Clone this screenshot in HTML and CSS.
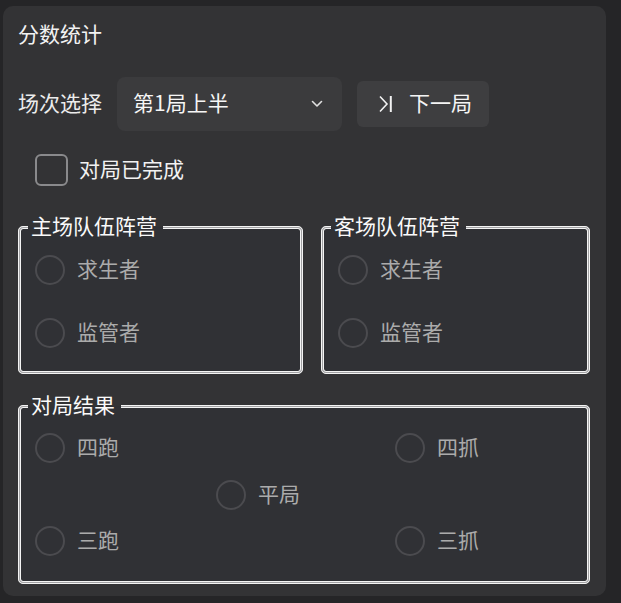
FILE: index.html
```html
<!DOCTYPE html>
<html lang="zh-CN">
<head>
<meta charset="utf-8">
<title>分数统计</title>
<link rel="stylesheet" href="styles.css">
</head>
<body>
<div class="panel">
  <h2 class="title">分数统计</h2>
  <div class="round-row">
    <span class="field-label">场次选择</span>
    <div class="select">
      <span class="select-value">第1局上半</span>
      <svg class="chevron" width="12" height="8" viewBox="0 0 12 8"><polyline points="1.5,1.5 6,6 10.5,1.5" fill="none" stroke="#e0e0e0" stroke-width="1.6" stroke-linecap="round" stroke-linejoin="round"/></svg>
    </div>
    <button class="next-btn" type="button">
      <svg class="next-icon" width="16" height="18" viewBox="0 0 16 18"><polyline points="2,1.5 9,9 2,16.5" fill="none" stroke="#f2f2f2" stroke-width="1.6"/><line x1="12.8" y1="1" x2="12.8" y2="17" stroke="#f2f2f2" stroke-width="2"/></svg>
      <span class="btn-text">下一局</span>
    </button>
  </div>
  <label class="check-row">
    <span class="checkbox"></span>
    <span class="check-text">对局已完成</span>
  </label>
  <div class="camps">
    <fieldset class="group">
      <legend>主场队伍阵营</legend>
      <div class="radio-list">
        <label class="radio"><span class="dot"></span><span class="radio-text">求生者</span></label>
        <label class="radio"><span class="dot"></span><span class="radio-text">监管者</span></label>
      </div>
    </fieldset>
    <fieldset class="group">
      <legend>客场队伍阵营</legend>
      <div class="radio-list">
        <label class="radio"><span class="dot"></span><span class="radio-text">求生者</span></label>
        <label class="radio"><span class="dot"></span><span class="radio-text">监管者</span></label>
      </div>
    </fieldset>
  </div>
  <fieldset class="group result">
    <legend>对局结果</legend>
    <div class="result-grid">
      <label class="radio r-4run"><span class="dot"></span><span class="radio-text">四跑</span></label>
      <label class="radio r-4catch"><span class="dot"></span><span class="radio-text">四抓</span></label>
      <label class="radio r-draw"><span class="dot"></span><span class="radio-text">平局</span></label>
      <label class="radio r-3run"><span class="dot"></span><span class="radio-text">三跑</span></label>
      <label class="radio r-3catch"><span class="dot"></span><span class="radio-text">三抓</span></label>
    </div>
  </fieldset>
</div>
</body>
</html>
```
FILE: styles.css
```css
* { box-sizing: border-box; }
html, body { margin: 0; padding: 0; }
body {
  background: #252527;
  font-family: "Noto Sans CJK SC", "Noto Sans", sans-serif;
  font-size: 21px;
  color: #f0f0f0;
  width: 621px;
  height: 603px;
  overflow: hidden;
}
.panel {
  margin: 6px 0 0 3px;
  width: 603px;
  height: 590px;
  background: #333335;
  border-radius: 10px;
  padding: 15px 16px 14px 15px;
  display: flex;
  flex-direction: column;
}
.title {
  margin: 0;
  font-size: 21px;
  font-weight: 400;
  line-height: 24px;
  padding-bottom: 4px;
  color: #f2f2f2;
}
.round-row {
  margin-top: 28px;
  display: flex;
  align-items: center;
  height: 54px;
}
.field-label,
.select-value,
.btn-text,
.check-text,
.radio-text {
  line-height: 25px;
  padding-bottom: 3px;
}
.field-label {
  color: #ececec;
  margin-right: 15px;
}
.select {
  width: 225px;
  height: 54px;
  background: #3b3b3d;
  border-radius: 8px;
  display: flex;
  align-items: center;
  justify-content: space-between;
  padding: 0 19px 0 16px;
}
.select-value { color: #f6f6f6; }
.chevron { display: block; }
.next-btn {
  margin-left: 15px;
  width: 132px;
  height: 46px;
  border: none;
  border-radius: 6px;
  background: #3e3e40;
  color: #f4f4f4;
  font: inherit;
  display: flex;
  align-items: center;
  padding: 0 0 0 21px;
}
.next-icon { display: block; margin-right: 15px; }
.check-row {
  margin-top: 23px;
  margin-left: 17px;
  display: flex;
  align-items: center;
  height: 32px;
}
.checkbox {
  width: 33px;
  height: 32px;
  border: 2px solid #8a8a8c;
  border-radius: 6px;
  margin-right: 11px;
}
.check-text { color: #f2f2f2; }
.camps {
  margin-top: 27px;
  display: grid;
  grid-template-columns: 285px 269px;
  column-gap: 18px;
}
.group {
  margin: 0;
  min-width: 0;
  border: 3px double #f4f4f4;
  border-radius: 5px;
  background: linear-gradient(#303135, #303135) padding-box, #a2a2a4 border-box;
  padding: 14px 14px 23px 14px;
}
.group legend {
  margin-left: -7px;
  padding: 0 6px 3px 3px;
  font-size: 21px;
  line-height: 25px;
  color: #fafafa;
  background: linear-gradient(to bottom, #333335 0 50%, #303135 50% 100%);
}
.radio-list {
  display: flex;
  flex-direction: column;
  gap: 33px;
}
.radio {
  display: flex;
  align-items: center;
  height: 30px;
}
.dot {
  width: 30px;
  height: 30px;
  border: 2px solid #4b4b4f;
  border-radius: 50%;
  margin-right: 12px;
  flex: none;
}
.radio-text {
  color: #ababab;
}
.result {
  margin-top: 18px;
  padding-top: 13px;
  padding-bottom: 25px;
}
.result-grid {
  display: grid;
  grid-template-columns: 181px 179px auto;
  grid-template-rows: 30px 30px 30px;
  row-gap: 16.5px;
}
.r-4run { grid-column: 1; grid-row: 1; }
.r-4catch { grid-column: 3; grid-row: 1; }
.r-draw { grid-column: 2; grid-row: 2; }
.r-3run { grid-column: 1; grid-row: 3; }
.r-3catch { grid-column: 3; grid-row: 3; }
```
